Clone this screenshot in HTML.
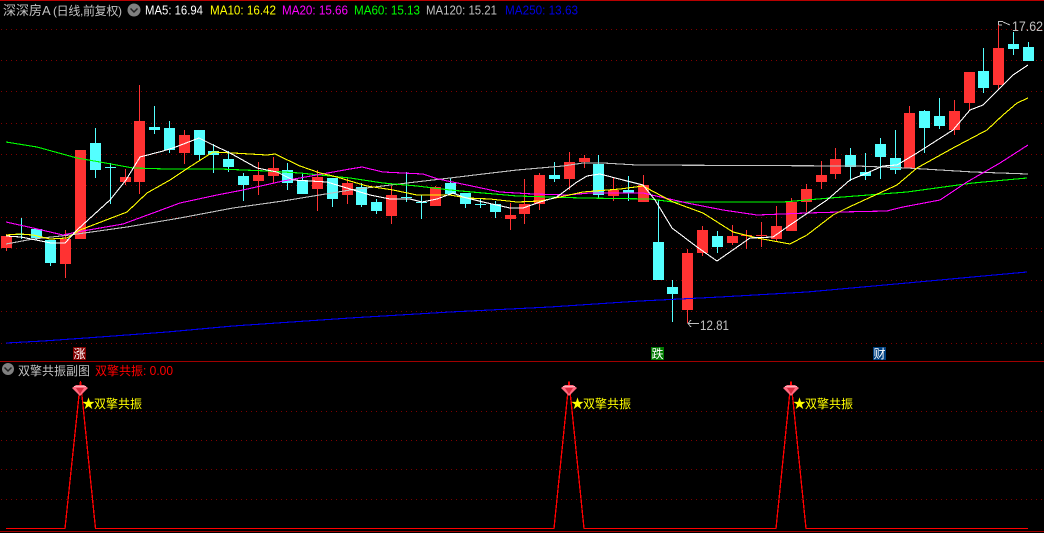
<!DOCTYPE html>
<html><head><meta charset="utf-8"><style>
html,body{margin:0;padding:0;background:#000;width:1044px;height:533px;overflow:hidden}
svg{display:block}
text{font-family:"Liberation Sans","WenQuanYi Zen Hei","Noto Sans CJK SC",sans-serif}
.c{font-family:"WenQuanYi Zen Hei","Liberation Sans","Noto Sans CJK SC",sans-serif}
.l{fill:none;shape-rendering:crispEdges;stroke-width:1.1;stroke-linejoin:round}
</style></head><body>
<svg width="1044" height="533" viewBox="0 0 1044 533" xmlns="http://www.w3.org/2000/svg">
<rect width="1044" height="533" fill="#000"/>
<rect x="0" y="0" width="1044" height="1" fill="#b80000"/>
<rect x="0" y="361" width="1044" height="1" fill="#a00000"/>
<rect x="0" y="531" width="1044" height="1" fill="#a00000"/>
<path shape-rendering="crispEdges" fill="none" stroke="#800000" stroke-dasharray="1 4" d="M1 29.5H1044M1 60.5H1044M1 91.5H1044M1 123.5H1044M1 154.5H1044M1 185.5H1044M1 217.5H1044M1 248.5H1044M1 280.5H1044M1 311.5H1044M1 343.5H1044M1 411.5H1044M1 440.5H1044M1 469.5H1044M1 499.5H1044"/>

<path shape-rendering="crispEdges" fill="none" stroke="#ff3232" d="M6.5 234V251M65.5 230V278M80.5 150V239M125.5 169V185M139.5 85V194M184.5 130V164M258.5 162V195M273.5 157V183M317.5 170V211M347.5 178V204M391.5 186V224M435.5 186V206M510.5 203V230M524.5 179V224M539.5 173V210M569.5 152V190M584.5 155V168M613.5 178V201M643.5 175V202M687.5 249V323M702.5 226V256M732.5 225V245M746.5 230V249M761.5 222V247M776.5 206V241M791.5 198V231M806.5 184V212M821.5 161V189M835.5 148V179M909.5 106V168M954.5 100V135M969.5 72V110M998.5 24V90"/>
<path shape-rendering="crispEdges" fill="none" stroke="#54ffff" d="M21.5 218V239M36.5 229V240M50.5 240V266M95.5 128V178M110.5 163V204M154.5 106V134M169.5 121V153M199.5 130V160M213.5 144V173M228.5 151V172M243.5 173V201M287.5 163V190M302.5 173V194M332.5 178V207M361.5 183V207M376.5 199V214M406.5 172V202M421.5 195V219M450.5 178V194M465.5 193V208M480.5 199V208M495.5 201V218M554.5 162V182M598.5 155V199M628.5 176V201M658.5 200V280M672.5 280V322M717.5 231V253M850.5 148V181M865.5 153V180M880.5 138V179M895.5 130V174M924.5 110V153M939.5 98V129M983.5 48V93M1013.5 32V55M1028.5 42V61"/>
<path shape-rendering="crispEdges" fill="#ff3232" d="M1 236h11v12h-11zM60 239h11v25h-11zM75 150h11v89h-11zM120 177h11v5h-11zM134 121h11v61h-11zM179 135h11v18h-11zM253 175h11v6h-11zM268 168h11v8h-11zM312 177h11v12h-11zM342 183h11v12h-11zM386 195h11v21h-11zM430 187h11v19h-11zM505 215h11v4h-11zM519 204h11v10h-11zM534 175h11v29h-11zM564 162h11v17h-11zM579 158h11v4h-11zM608 190h11v6h-11zM638 185h11v17h-11zM682 253h11v57h-11zM697 230h11v23h-11zM727 236h11v7h-11zM741 235h11v1h-11zM756 235h11v1h-11zM771 226h11v13h-11zM786 202h11v29h-11zM801 189h11v13h-11zM816 175h11v7h-11zM830 159h11v15h-11zM904 113h11v55h-11zM949 111h11v19h-11zM964 72h11v31h-11zM993 48h11v37h-11z"/>
<path shape-rendering="crispEdges" fill="#54ffff" d="M16 234h11v1h-11zM31 229h11v9h-11zM45 240h11v23h-11zM90 143h11v27h-11zM105 167h11v1h-11zM149 127h11v3h-11zM164 128h11v22h-11zM194 130h11v25h-11zM208 151h11v4h-11zM223 159h11v8h-11zM238 176h11v9h-11zM282 170h11v13h-11zM297 180h11v14h-11zM327 178h11v21h-11zM356 187h11v18h-11zM371 202h11v9h-11zM401 197h11v1h-11zM416 202h11v1h-11zM445 183h11v11h-11zM460 193h11v11h-11zM475 204h11v1h-11zM490 204h11v8h-11zM549 175h11v4h-11zM593 164h11v31h-11zM623 190h11v3h-11zM653 242h11v38h-11zM667 287h11v7h-11zM712 236h11v11h-11zM845 155h11v12h-11zM860 172h11v4h-11zM875 144h11v13h-11zM890 158h11v12h-11zM919 111h11v17h-11zM934 116h11v10h-11zM978 71h11v17h-11zM1008 44h11v5h-11zM1023 47h11v14h-11z"/>

<polyline class="l" stroke="#0000f0" points="6,343 43,341 100,337 167,332 233,326 350,318 450,312 550,307 640,301 720,297 807,292 907,283 1027,272"/>
<polyline class="l" stroke="#c0c0c0" points="6,244 33,239 70,235 127,227 180,218 233,208 283,201 350,190 407,183 450,178 483,174 517,170 563,166 583,163 603,163 637,165 857,166 907,168 973,172 1028,174"/>
<polyline class="l" stroke="#00ff00" points="6,142 37,147 77,158 100,162 133,168 167,169 220,169 267,171 300,173 350,178 383,183 417,186 450,190 483,193 517,196 583,198 650,199 673,202 697,202 783,202 830,198 907,192 973,183 1027,178"/>
<polyline class="l" stroke="#ff00ff" points="6,222 33,228 63,235 77,232 123,224 153,213 180,203 217,195 243,190 283,181 350,169 362,167 383,172 423,174 438,179 467,185 500,192 533,194 567,195 590,193 643,193 687,203 723,210 757,215 807,213 840,212 887,211 903,207 940,200 967,182 1000,163 1028,145"/>
<polyline class="l" stroke="#ffff00" points="6,235 20,234 33,235 50,239 67,238 80,230 127,212 147,193 170,180 188,168 213,152 233,153 267,155 275,154 300,166 320,173 337,177 350,181 367,186 393,190 417,195 450,195 467,198 490,199 517,202 540,201 560,197 583,192 620,189 643,186 673,202 703,213 733,232 757,238 790,244 807,235 833,215 847,208 897,185 917,168 953,148 987,130 1003,115 1017,103 1028,98"/>
<polyline class="l" stroke="#ffffff" points="6,236 21,237 36,240 51,243 65,243 77,230 110,200 126,180 140,157 163,151 173,148 199,138 213,145 230,153 257,168 277,172 293,180 327,182 350,189 370,195 390,199 410,199 422,202 437,199 453,193 463,197 483,202 510,208 523,208 540,202 557,197 577,182 587,176 600,174 623,180 643,185 655,200 672,228 697,247 717,261 750,238 773,237 790,225 827,200 850,180 867,173 883,166 897,165 917,153 953,130 970,110 983,105 993,95 1013,75 1028,65"/>

<path fill="none" stroke="#c0c0c0" shape-rendering="crispEdges" d="M999 21.5H1003M998.5 21V25M999 25H1002M1003 22L1010 25"/>
<text x="1012" y="31" font-size="14" fill="#c0c0c0" textLength="31" lengthAdjust="spacingAndGlyphs">17.62</text>
<path fill="none" stroke="#c0c0c0" shape-rendering="crispEdges" d="M688 323.5H699M688 323.5L691 320M688 323.5L691 327"/>
<text x="700" y="330" font-size="14" fill="#c0c0c0" textLength="29" lengthAdjust="spacingAndGlyphs">12.81</text>

<text class="c" x="3" y="15" font-size="13" fill="#c0c0c0">深深房A</text>
<text class="c" x="53" y="15" font-size="12" fill="#c0c0c0" textLength="69">(日线,前复权)</text>
<circle cx="134" cy="10" r="6.5" fill="#808080"/>
<path d="M130.5 8.5L134 12L137.5 8.5" fill="none" stroke="#222" stroke-width="1.5"/>
<text x="145" y="14.5" font-size="13" fill="#ffffff" textLength="58" lengthAdjust="spacingAndGlyphs">MA5: 16.94</text>
<text x="210" y="14.5" font-size="13" fill="#ffff00" textLength="66" lengthAdjust="spacingAndGlyphs">MA10: 16.42</text>
<text x="282" y="14.5" font-size="13" fill="#ff00ff" textLength="66" lengthAdjust="spacingAndGlyphs">MA20: 15.66</text>
<text x="354" y="14.5" font-size="13" fill="#00ff00" textLength="66" lengthAdjust="spacingAndGlyphs">MA60: 15.13</text>
<text x="426" y="14.5" font-size="13" fill="#c0c0c0" textLength="71" lengthAdjust="spacingAndGlyphs">MA120: 15.21</text>
<text x="505" y="14.5" font-size="13" fill="#0000e0" textLength="73" lengthAdjust="spacingAndGlyphs">MA250: 13.63</text>

<rect x="73" y="347" width="13" height="13" fill="#800000"/>
<text class="c" x="73.5" y="358" font-size="12" fill="#fff">涨</text>
<rect x="651" y="347" width="13" height="13" fill="#007800"/>
<text class="c" x="651.5" y="358" font-size="12" fill="#fff">跌</text>
<rect x="873" y="347" width="13" height="13" fill="#004080"/>
<text class="c" x="873.5" y="358" font-size="12" fill="#fff">财</text>

<circle cx="8" cy="369" r="6" fill="#808080"/>
<path d="M4.5 367.5L8 371L11.5 367.5" fill="none" stroke="#222" stroke-width="1.5"/>
<text class="c" x="18" y="375" font-size="12" fill="#c0c0c0" textLength="72">双擎共振副图</text>
<text class="c" x="95" y="375" font-size="12" fill="#ff0000" textLength="48">双擎共振</text>
<text x="143" y="375" font-size="13" fill="#ff0000" textLength="30" lengthAdjust="spacingAndGlyphs">: 0.00</text>

<path fill="none" stroke="#ff0000" stroke-width="1.3" shape-rendering="crispEdges" d="M6 528.5H65L80.5 381L95.5 528.5H554L569 381L584 528.5H776L791 381L806 528.5H1028"/>

<polygon points="72,388 76,385 84,385 88,388 80,396" fill="#ff6a80"/>
<polygon points="76,388 84,388 80,394" fill="#d8283c"/>
<path d="M74 386.5H86" stroke="#ffb0b8"/>
<polygon points="561,388 565,385 573,385 577,388 569,396" fill="#ff6a80"/>
<polygon points="565,388 573,388 569,394" fill="#d8283c"/>
<path d="M563 386.5H575" stroke="#ffb0b8"/>
<polygon points="783,388 787,385 795,385 799,388 791,396" fill="#ff6a80"/>
<polygon points="787,388 795,388 791,394" fill="#d8283c"/>
<path d="M785 386.5H797" stroke="#ffb0b8"/>

<text class="c" x="82" y="408" font-size="13" fill="#ffff00">★</text>
<text class="c" x="94" y="408" font-size="12" fill="#ffff00" textLength="48">双擎共振</text>
<text class="c" x="571" y="408" font-size="13" fill="#ffff00">★</text>
<text class="c" x="583" y="408" font-size="12" fill="#ffff00" textLength="48">双擎共振</text>
<text class="c" x="793" y="408" font-size="13" fill="#ffff00">★</text>
<text class="c" x="805" y="408" font-size="12" fill="#ffff00" textLength="48">双擎共振</text>
</svg>
</body></html>
